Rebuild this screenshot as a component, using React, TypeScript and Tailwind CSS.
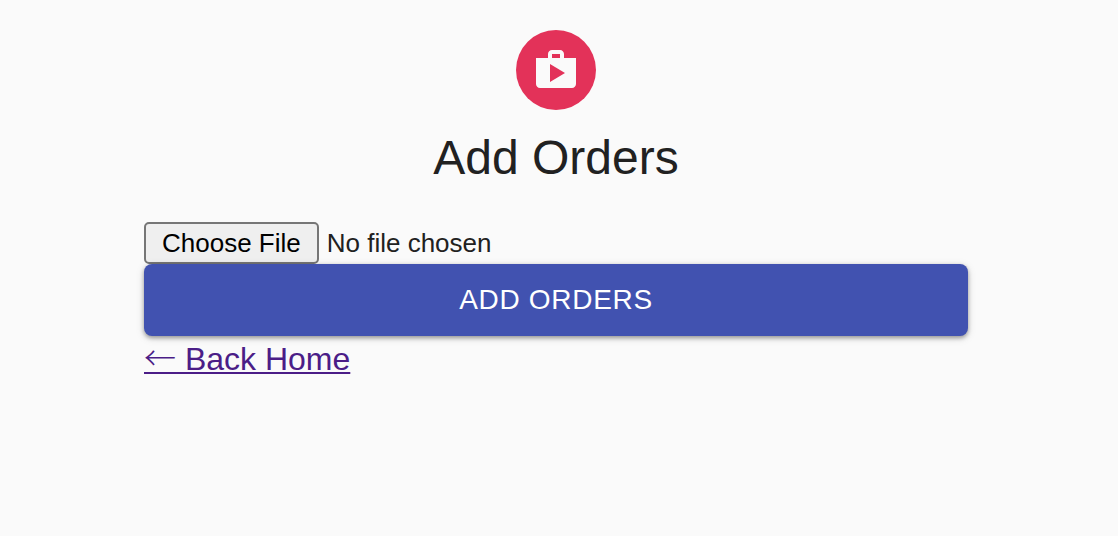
export default function App() {
  return (
    <div className="min-h-screen bg-[#fafafa] pt-[30px] pr-[6px] font-['Liberation_Sans',Arial,sans-serif] text-[#212121]">
      <main className="mx-auto flex w-3/4 max-w-[824px] flex-col">
        <div className="flex size-20 items-center justify-center self-center rounded-full bg-[#e33259] text-[#fafafa]">
          <svg viewBox="0 0 24 24" className="size-12" fill="currentColor" aria-hidden="true">
            <path d="M16 6V4c0-1.110-.89-2-2-2h-4c-1.110 0-2 .89-2 2v2H2v13c0 1.110.89 2 2 2h16c1.110 0 2-.89 2-2V6h-6zm-6-2h4v2h-4V4zM9 18V9l7.500 4.500L9 18z" />
          </svg>
        </div>
        <h1 className="mt-4 text-center text-[48px] leading-[64px]">Add Orders</h1>
        <form className="mt-8 flex flex-col" onSubmit={(event) => event.preventDefault()}>
          <input
            type="file"
            aria-label="Orders file"
            className="h-[42px] w-full text-[26px] leading-[38px] file:mr-2 file:h-[42px] file:rounded-[5px] file:border-2 file:border-solid file:border-[#767676] file:bg-[#efefef] file:px-4 file:py-0 file:text-[26px] file:font-normal file:text-black"
          />
          <button
            type="submit"
            className="h-[72px] rounded-lg bg-[#4152b0] text-[28px] tracking-wide text-white uppercase shadow-[0_2px_4px_rgba(0,0,0,0.35),0_2px_10px_rgba(0,0,0,0.12)]"
          >
            Add Orders
          </button>
        </form>
        <a
          href="/"
          className="mt-1 self-start text-[32px] leading-[38px] text-[#4b1d87] underline decoration-2 underline-offset-2"
        >
          <span className="font-['Noto_Sans_CJK_JP',sans-serif] leading-none font-light">←</span> Back Home
        </a>
      </main>
    </div>
  );
}
